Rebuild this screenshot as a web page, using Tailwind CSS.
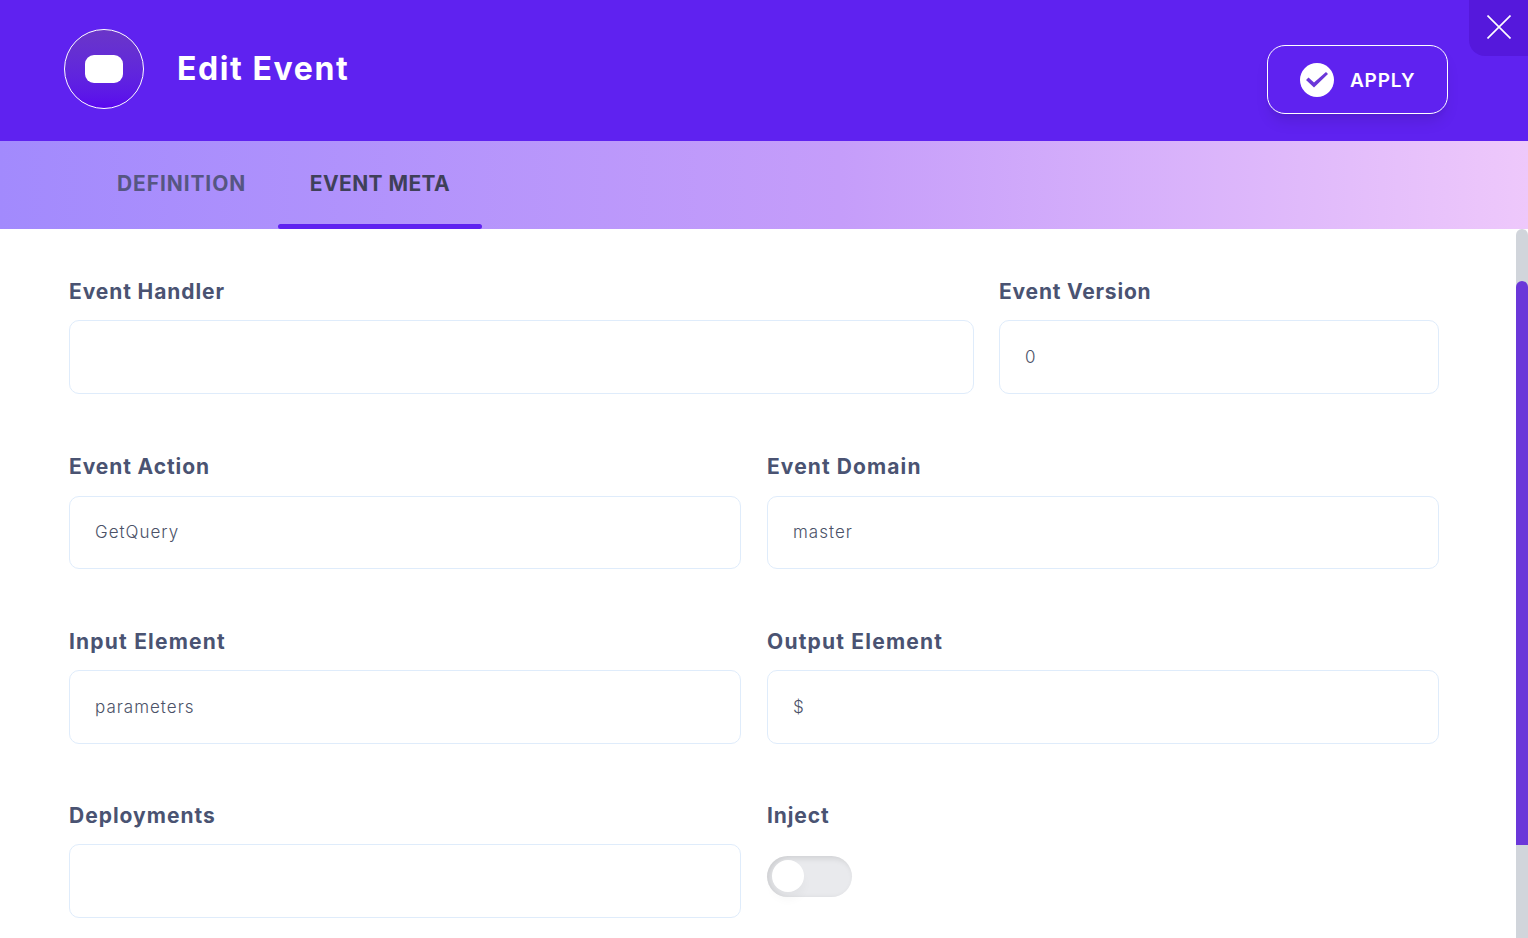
<!DOCTYPE html>
<html lang="en">
<head>
    <meta charset="UTF-8">
    <meta name="viewport" content="width=device-width, initial-scale=1.0">
    <script src="https://cdn.jsdelivr.net/npm/@tailwindcss/browser@4"></script>
    <title>Edit Event</title>
</head>
<body class="font-['Inter',sans-serif] bg-white overflow-hidden">
    <div class="relative w-[1528px] h-[938px] overflow-hidden">
        <!-- header -->
        <div class="relative h-[141px] bg-[#5f22f0] flex items-start pl-[64px] pr-[80px]">
            <div class="mt-[29px] w-[80px] h-[80px] rounded-full border border-white bg-gradient-to-b from-[#6a35c8] to-[#5a06ee] flex items-center justify-center">
                <div class="w-[38px] h-[28px] bg-white rounded-[9px]"></div>
            </div>
            <h1 class="ml-[33px] mt-[48px] text-[32px] leading-[41px] font-bold text-white tracking-[1.6px]">Edit Event</h1>
            <button class="ml-auto mt-[45px] w-[181px] h-[69px] rounded-[18px] border border-white flex items-center pl-[32px] shadow-lg shadow-black/10">
                <svg viewBox="0 0 34 34" class="w-[34px] h-[34px]">
                    <circle cx="17" cy="17" r="17" fill="#fff"/>
                    <path d="M6 17l2.5-2.5 5.5 5L26 9l2 2-14 13.5z" fill="#6b37d9"/>
                </svg>
                <span class="ml-[16px] mt-[3px] text-[19px] font-semibold text-white tracking-[0.8px]">APPLY</span>
            </button>
            <button class="absolute top-0 right-0 w-[59px] h-[56px] bg-[#5518dc] rounded-bl-[16px] flex items-center justify-center">
                <svg viewBox="0 0 24 24" class="w-[24px] h-[24px] -mt-[2px]" fill="none" stroke="#fff" stroke-width="1.6">
                    <path d="M0.5 0.5l23 23M23.5 0.5l-23 23"/>
                </svg>
            </button>
        </div>
        <!-- tabs -->
        <div class="h-[88px] bg-gradient-to-r from-[#a28afd] via-[#c59dfa] via-55% to-[#eec8fb] flex pl-[85px]">
            <div class="w-[193px] flex items-center pl-[32px] pb-[3px] text-[21px] font-bold text-[#565682] tracking-[0.9px]">DEFINITION</div>
            <div class="w-[204px] relative flex items-center justify-center pb-[3px] text-[21px] font-bold text-[#3f4059] tracking-[0.4px]">
                EVENT META
                <div class="absolute bottom-0 left-0 right-0 h-[5px] bg-[#5f22f0] rounded-full"></div>
            </div>
        </div>
        <!-- form -->
        <div class="pl-[69px] w-[1439px] pt-[49px] flex flex-col text-[#4b5268] text-[17px] font-light tracking-[1px]">
            <div class="flex gap-[25px]">
                <div class="w-[905px]">
                    <div class="text-[21px] leading-[28px] font-bold text-[#4a5372] tracking-[0.9px] mb-[14px]">Event Handler</div>
                    <div class="h-[74px] border border-[#dfecfb] rounded-[10px] flex items-center px-[25px] pt-[2px]"></div>
                </div>
                <div class="flex-1">
                    <div class="text-[21px] leading-[28px] font-bold text-[#4a5372] tracking-[0.8px] mb-[14px]">Event Version</div>
                    <div class="h-[74px] border border-[#dfecfb] rounded-[10px] flex items-center px-[25px] pt-[2px]">0</div>
                </div>
            </div>
            <div class="mt-[59px] grid grid-cols-2 gap-x-[26px]">
                <div>
                    <div class="text-[21px] leading-[28px] font-bold text-[#4a5372] tracking-[0.9px] mb-[15px]">Event Action</div>
                    <div class="h-[73px] border border-[#dfecfb] rounded-[10px] flex items-center px-[25px]">GetQuery</div>
                </div>
                <div>
                    <div class="text-[21px] leading-[28px] font-bold text-[#4a5372] tracking-[1.1px] mb-[15px]">Event Domain</div>
                    <div class="h-[73px] border border-[#dfecfb] rounded-[10px] flex items-center px-[25px]">master</div>
                </div>
            </div>
            <div class="mt-[59px] grid grid-cols-2 gap-x-[26px]">
                <div>
                    <div class="text-[21px] leading-[28px] font-bold text-[#4a5372] tracking-[1.2px] mb-[14px]">Input Element</div>
                    <div class="h-[74px] border border-[#dfecfb] rounded-[10px] flex items-center px-[25px] pt-[2px]">parameters</div>
                </div>
                <div>
                    <div class="text-[21px] leading-[28px] font-bold text-[#4a5372] tracking-[1.2px] mb-[14px]">Output Element</div>
                    <div class="h-[74px] border border-[#dfecfb] rounded-[10px] flex items-center px-[25px] pt-[2px]">$</div>
                </div>
            </div>
            <div class="mt-[58px] grid grid-cols-2 gap-x-[26px]">
                <div>
                    <div class="text-[21px] leading-[28px] font-bold text-[#4a5372] tracking-[1px] mb-[14px]">Deployments</div>
                    <div class="h-[74px] border border-[#dfecfb] rounded-[10px]"></div>
                </div>
                <div>
                    <div class="text-[21px] leading-[28px] font-bold text-[#4a5372] tracking-[0.9px] mb-[26px]">Inject</div>
                    <div class="relative w-[85px] h-[41px] rounded-full bg-[#e9eaed] shadow-[inset_3px_2px_6px_rgba(0,0,0,0.12)]">
                        <div class="absolute left-[5px] top-[4px] w-[32px] h-[32px] rounded-full bg-white shadow-[0_8px_10px_rgba(0,0,0,0.03)]"></div>
                    </div>
                </div>
            </div>
        </div>
        <!-- scrollbar -->
        <div class="absolute right-0 top-[229px] bottom-0 w-[12px] bg-[#d1d5db] rounded-t-full">
            <div class="absolute top-[52px] left-0 w-[12px] h-[564px] bg-[#6b37d9] rounded-t-full"></div>
        </div>
    </div>
</body>
</html>
